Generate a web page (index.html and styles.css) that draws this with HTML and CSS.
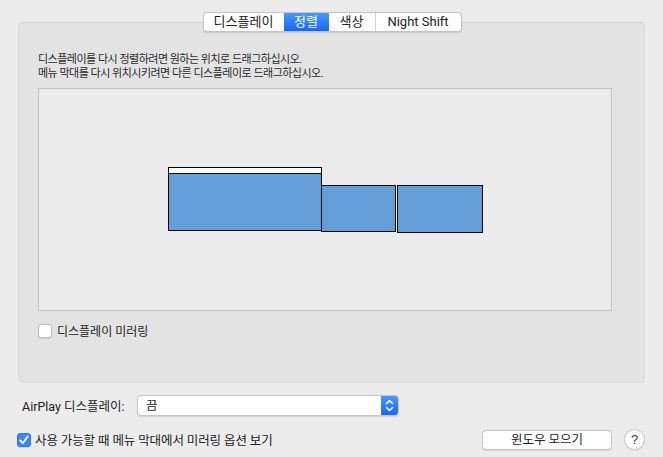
FILE: index.html
```html
<!DOCTYPE html>
<html lang="ko">
<head>
<meta charset="utf-8">
<link rel="stylesheet" href="styles.css">
</head>
<body>
<div class="window">
  <div class="tabs">
    <div class="tab">디스플레이</div>
    <div class="tab active">정렬</div>
    <div class="tab">색상</div>
    <div class="tab">Night Shift</div>
  </div>
  <div class="panel">
    <p class="info">디스플레이를 다시 정렬하려면 원하는 위치로 드래그하십시오.<br>메뉴 막대를 다시 위치시키려면 다른 디스플레이로 드래그하십시오.</p>
    <div class="arrange">
      <div class="disp main"><div class="menubar"></div></div>
      <div class="disp second"></div>
      <div class="disp third"></div>
    </div>
    <label class="check-row mirror">
      <span class="box"></span>
      <span>디스플레이 미러링</span>
    </label>
  </div>
  <div class="airplay-row">
    <span class="label">AirPlay 디스플레이:</span>
    <div class="popup">
      <span class="value">끔</span>
      <span class="stepper">
        <svg width="9" height="13" viewBox="0 0 9 13"><path d="M1.5 4.5 L4.5 1.5 L7.5 4.5 M1.5 8.5 L4.5 11.5 L7.5 8.5" fill="none" stroke="#fff" stroke-width="1.6" stroke-linecap="round" stroke-linejoin="round"/></svg>
      </span>
    </div>
  </div>
  <div class="bottom-row">
    <label class="check-row opt">
      <span class="box checked">
        <svg width="14" height="14" viewBox="0 0 14 14"><path d="M3.2 7.4 L5.8 10.2 L10.8 3.4" fill="none" stroke="#fff" stroke-width="1.8" stroke-linecap="round" stroke-linejoin="round"/></svg>
      </span>
      <span>사용 가능할 때 메뉴 막대에서 미러링 옵션 보기</span>
    </label>
    <div class="btn">윈도우 모으기</div>
    <div class="help">?</div>
  </div>
</div>
</body>
</html>
```

FILE: styles.css
```css
* { box-sizing: border-box; }
html, body { margin: 0; padding: 0; }
body {
  width: 663px;
  height: 457px;
  background: #ececec;
  font-family: Roboto, "Noto Sans CJK KR", sans-serif;
  color: #1f1f1f;
  overflow: hidden;
}
.window {
  padding: 12px 18px 0 18px;
  display: flex;
  flex-direction: column;
}
.tabs {
  align-self: center;
  display: flex;
  height: 20px;
  background: #fff;
  border: 1px solid #c4c4c4;
  border-radius: 4px;
  box-shadow: 0 0.5px 1px rgba(0,0,0,0.12);
  position: relative;
  z-index: 2;
  margin-left: 1px;
}
.tab {
  font-size: 13px;
  line-height: 18px;
  border-left: 1px solid #d4d4d4;
  color: #222;
  text-align: center;
}
.tab:nth-child(1) { border-left: none; width: 80px; }
.tab:nth-child(2) { width: 45px; }
.tab:nth-child(3) { width: 46px; }
.tab:nth-child(4) { width: 86px; }
.tab.active {
  background: linear-gradient(#4a97fb, #1769f4);
  color: #fff;
  border-left: none;
}
.tab.active + .tab { border-left: none; }
.panel {
  margin-top: -10px;
  height: 361px;
  width: 627px;
  background: #e3e3e3;
  border: 1px solid #dadada;
  border-top-color: #d3d3d3;
  border-radius: 5px;
  padding: 30px 0 0 19px;
}
.info {
  margin: 0;
  font-size: 11px;
  letter-spacing: -0.5px;
  line-height: 14px;
  color: #2a2a2a;
}
.arrange {
  margin-top: 7px;
  position: relative;
  width: 574px;
  height: 223px;
  background: #ebebeb;
  border: 1px solid #c2c2c2;
}
.disp {
  position: absolute;
  background: #639ed6;
  border: 1px solid #000;
}
.main { left: 129px; top: 78px; width: 154px; height: 64px; }
.menubar { height: 6px; background: #fff; border-bottom: 1px solid #000; }
.second { left: 282px; top: 96px; width: 75px; height: 47px; }
.third { left: 358px; top: 96px; width: 86px; height: 48px; }
.check-row {
  display: flex;
  align-items: center;
  gap: 5px;
  font-size: 12px;
  color: #222;
}
.mirror { margin-top: 11px; }
.opt { font-size: 12.5px; letter-spacing: -0.1px; gap: 4px; }
.box {
  width: 14px;
  height: 14px;
  border-radius: 3px;
  background: #fff;
  border: 1px solid #bdbdbd;
  box-shadow: 0 0.5px 1px rgba(0,0,0,0.1);
  flex: none;
  display: flex;
}
.box.checked {
  background: #3a86f8;
  border-color: #2e78ee;
}
.box.checked svg { margin: -1px; }
.airplay-row {
  display: flex;
  align-items: center;
  margin-top: 12px;
  padding-left: 4px;
}
.label {
  font-size: 12.5px;
  width: 115px;
  color: #222;
}
.popup {
  width: 262px;
  height: 21px;
  background: #fff;
  border: 1px solid #c6c6c6;
  border-radius: 4px;
  display: flex;
  overflow: hidden;
  box-shadow: 0 0.5px 1px rgba(0,0,0,0.1);
}
.value {
  flex: 1;
  font-size: 12.5px;
  line-height: 19px;
  padding-left: 8px;
  color: #222;
}
.stepper {
  width: 17px;
  background: linear-gradient(#4a97fb, #1769f4);
  display: flex;
  align-items: center;
  justify-content: center;
}
.bottom-row {
  display: flex;
  align-items: center;
  margin-top: 13px;
  margin-left: -1px;
}
.btn {
  margin-left: auto;
  width: 130px;
  height: 20px;
  background: #fff;
  border: 1px solid #c6c6c6;
  border-radius: 4px;
  font-size: 12.5px;
  text-align: center;
  line-height: 18px;
  box-shadow: 0 0.5px 1px rgba(0,0,0,0.1);
  color: #222;
}
.help {
  margin-left: 12px;
  width: 21px;
  height: 21px;
  border-radius: 50%;
  background: #fff;
  border: 1px solid #c6c6c6;
  box-shadow: 0 0.5px 1px rgba(0,0,0,0.1);
  font-family: "Liberation Sans", sans-serif;
  font-size: 13px;
  text-align: center;
  line-height: 19px;
  color: #333;
}
```
